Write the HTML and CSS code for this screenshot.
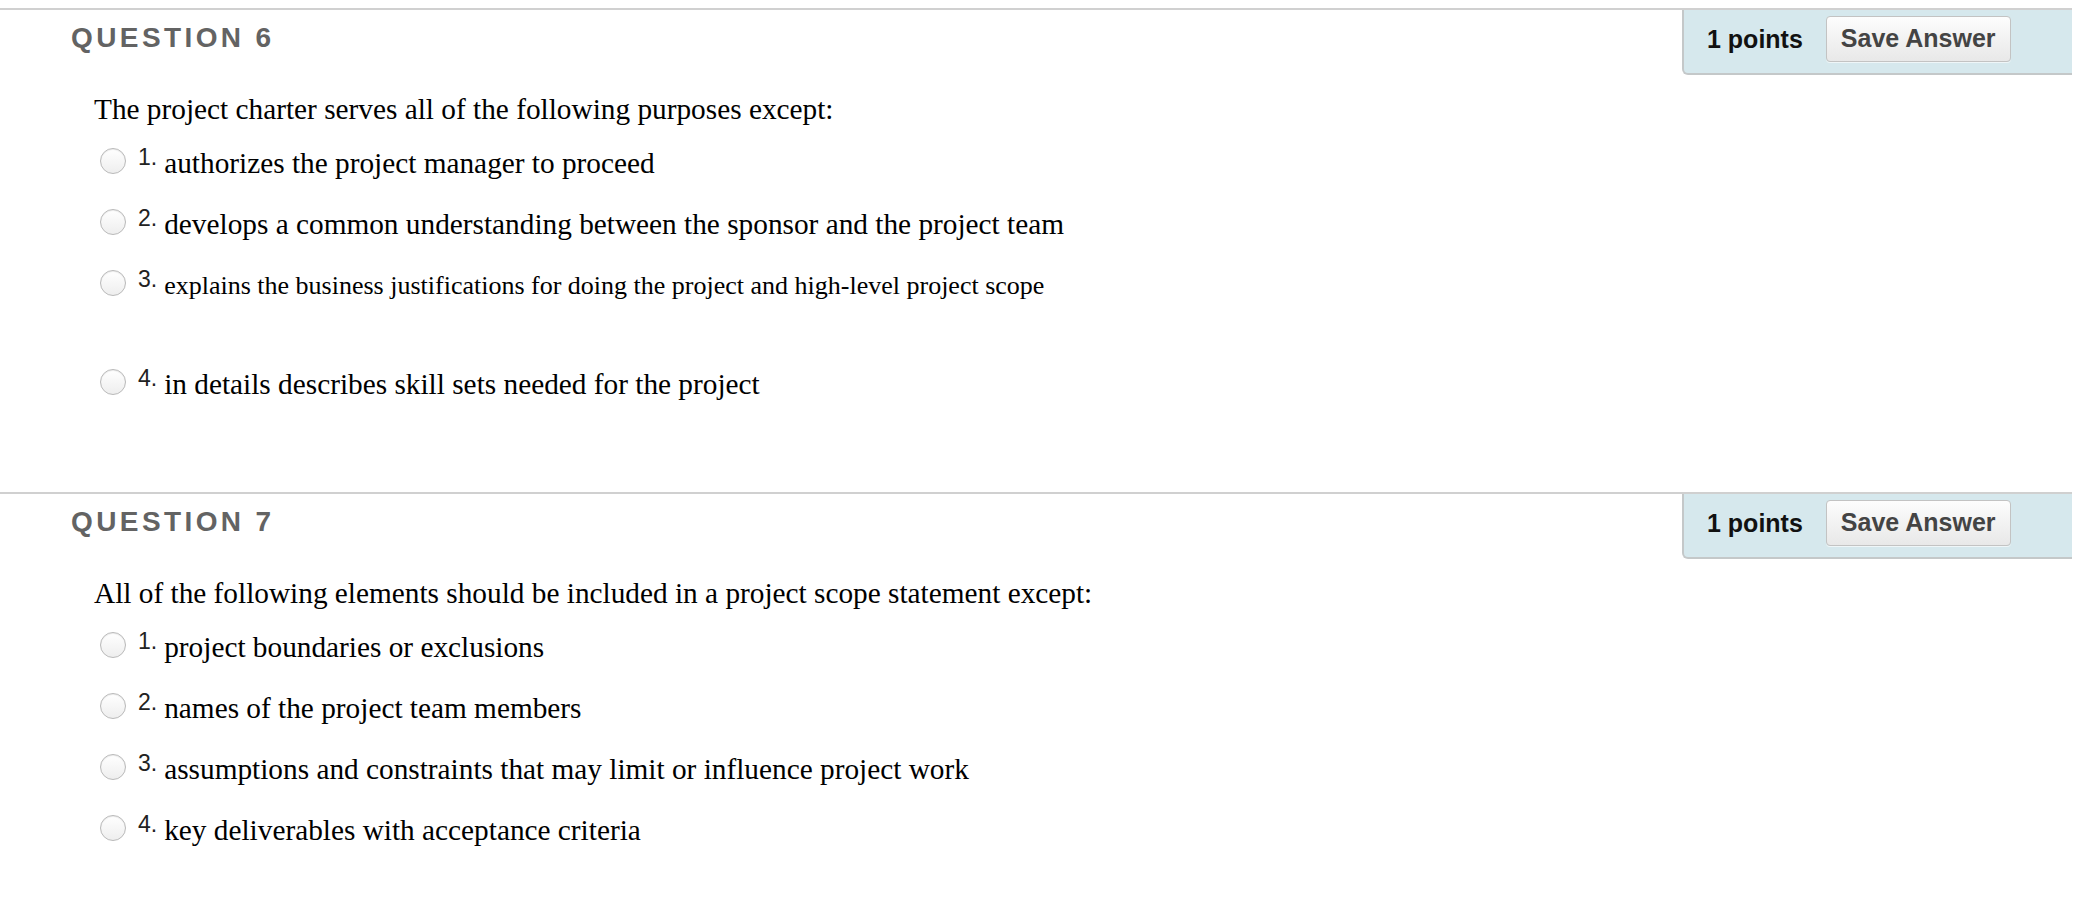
FILE: index.html
```html
<!DOCTYPE html>
<html lang="en">
<head>
<meta charset="utf-8">
<title>Quiz</title>
<link rel="stylesheet" href="styles.css">
</head>
<body>
<div class="quiz">
  <section class="question">
    <div class="q-head">
      <h2 class="q-title">QUESTION 6</h2>
      <div class="q-panel">
        <span class="q-points">1 points</span>
        <button class="q-save" type="button">Save Answer</button>
      </div>
    </div>
    <p class="q-text">The project charter serves all of the following purposes except:</p>
    <ul class="options">
      <li class="option"><span class="radio"></span><span class="num">1.</span><span class="label">authorizes the project manager to proceed</span></li>
      <li class="option"><span class="radio"></span><span class="num">2.</span><span class="label">develops a common understanding between the sponsor and the project team</span></li>
      <li class="option option--tall"><span class="radio"></span><span class="num">3.</span><span class="label label--small">explains the business justifications for doing the project and high-level project scope</span></li>
      <li class="option"><span class="radio"></span><span class="num">4.</span><span class="label">in details describes skill sets needed for the project</span></li>
    </ul>
  </section>
  <section class="question">
    <div class="q-head">
      <h2 class="q-title">QUESTION 7</h2>
      <div class="q-panel">
        <span class="q-points">1 points</span>
        <button class="q-save" type="button">Save Answer</button>
      </div>
    </div>
    <p class="q-text">All of the following elements should be included in a project scope statement except:</p>
    <ul class="options">
      <li class="option"><span class="radio"></span><span class="num">1.</span><span class="label">project boundaries or exclusions</span></li>
      <li class="option"><span class="radio"></span><span class="num">2.</span><span class="label">names of the project team members</span></li>
      <li class="option"><span class="radio"></span><span class="num">3.</span><span class="label">assumptions and constraints that may limit or influence project work</span></li>
      <li class="option"><span class="radio"></span><span class="num">4.</span><span class="label">key deliverables with acceptance criteria</span></li>
    </ul>
  </section>
</div>
</body>
</html>
```
FILE: styles.css
```css
* { box-sizing: border-box; }

html, body {
  margin: 0;
  padding: 0;
  background: #ffffff;
}

body {
  font-family: "Liberation Serif", "Times New Roman", serif;
  color: #000;
}

.quiz {
  padding-top: 8px;
}

.question {
  border-top: 2px solid #d0d0d0;
  margin-right: 24px;
  padding-bottom: 91px;
}

.q-head {
  display: flex;
  justify-content: space-between;
  align-items: flex-start;
  height: 65px;
}

.q-title {
  margin: 12px 0 0 0;
  padding-left: 71px;
  font-family: "Liberation Sans", Arial, sans-serif;
  font-weight: bold;
  font-size: 28px;
  line-height: 32px;
  letter-spacing: 3.4px;
  color: #636363;
}

.q-panel {
  width: 390px;
  height: 65px;
  display: flex;
  align-items: center;
  align-self: flex-start;
  gap: 23px;
  padding: 0 0 6px 23px;
  background: #d6e8ed;
  border-left: 2px solid #c4c8c9;
  border-bottom: 2px solid #c4c8c9;
  border-bottom-left-radius: 6px;
}

.q-points {
  font-family: "Liberation Sans", Arial, sans-serif;
  font-weight: bold;
  font-size: 25px;
  line-height: 46px;
  color: #111;
}

.q-save {
  height: 46px;
  padding: 0 14px;
  font-family: "Liberation Sans", Arial, sans-serif;
  font-weight: bold;
  font-size: 25px;
  color: #444;
  border: 1px solid #c3c3c3;
  border-radius: 4px;
  background: linear-gradient(#fdfdfd, #e8e8e8);
  box-shadow: 0 1px 0 rgba(255,255,255,0.6);
}

.q-text {
  margin: 18px 0 21px 0;
  padding-left: 94px;
  font-size: 29.3px;
  line-height: 33px;
}

.options {
  list-style: none;
  margin: 0;
  padding: 0 0 0 100px;
  display: flex;
  flex-direction: column;
  gap: 28px;
}

.option {
  display: flex;
  align-items: flex-start;
}

.option--tall {
  padding-bottom: 38px;
}

.radio {
  width: 26px;
  height: 26px;
  margin-top: 1px;
  margin-right: 12px;
  border-radius: 50%;
  border: 1px solid #b9b9b9;
  background: linear-gradient(#ffffff, #eeeeee);
  box-shadow: inset 0 1px 1px rgba(0,0,0,0.08);
  flex: none;
}

.num {
  font-family: "Liberation Sans", Arial, sans-serif;
  font-size: 23px;
  line-height: 20px;
  color: #222;
  margin-right: 7px;
}

.label {
  font-size: 29.3px;
  line-height: 33px;
}

.label--small {
  font-size: 26px;
}
```
